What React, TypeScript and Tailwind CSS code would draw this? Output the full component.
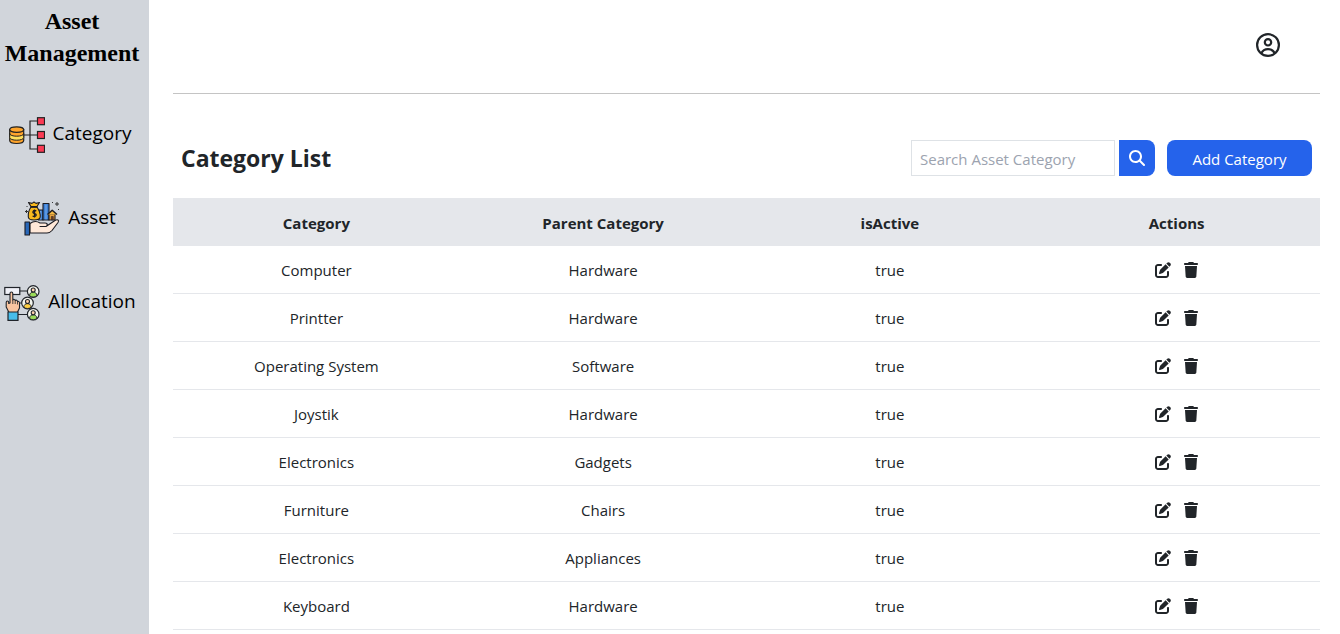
import type { ReactNode } from "react";
import { FaMagnifyingGlass, FaPenToSquare, FaTrash } from "react-icons/fa6";

function CategoryIcon() {
  return (
    <svg viewBox="0 0 36 36" className="size-9 shrink-0" aria-hidden="true">
      <g fill="none" stroke="#222" strokeWidth="1.2">
        <path d="M15 18h13M28 4h-7v28h7" />
      </g>
      <g fill="#fb3b55" stroke="#222" strokeWidth="1.2">
        <rect x="28.5" y="0.7" width="7" height="7" />
        <rect x="28.5" y="14.5" width="7" height="7" />
        <rect x="28.5" y="28.3" width="7" height="7" />
      </g>
      <path d="M.7 12.5v11c0 4 14 4 14 0v-11z" fill="#ffa42b" stroke="#222" strokeWidth="1.2" />
      <path d="M.7 16.5c0 3.6 14 3.6 14 0v4c0 3.6-14 3.6-14 0z" fill="#ffe05c" stroke="#222" strokeWidth="1" />
      <ellipse cx="7.7" cy="12.6" rx="7" ry="2.8" fill="#ffa42b" stroke="#222" strokeWidth="1.2" />
    </svg>
  );
}

function AssetIcon() {
  return (
    <svg viewBox="0 0 36 36" className="size-9 shrink-0" aria-hidden="true">
      <g stroke="#1b1b22" strokeWidth="1.1" strokeLinejoin="round">
        <path d="M14.500 9h4.500v10h-4.500z" fill="#3b7fd6" />
        <path d="M19 2.500h6V19h-6z" fill="#3b7fd6" />
        <path d="M22 3.500V18.500M16.700 10v8.500" stroke="#8fbdf2" strokeWidth=".8" />
        <path d="M25 13h6v6h-6z" fill="#e8a13c" />
        <path d="m23.500 13.500 4.700-4.300 4.800 4.300" fill="#f5b943" strokeWidth="1.500" />
        <path d="M27.300 15.500h2V19h-2z" fill="#733f22" strokeWidth=".5" />
        <path d="M7 6C5 9 4 13 4.300 16c.2 2.500 1.700 3 5.700 3s6-.5 6.200-3c.3-3-1.200-7-3.200-10z" fill="#f8b91e" />
        <path d="m7 5.500-2.500-4 3.500.9 2-1.400 2 1.400 3.500-.9-2.500 4z" fill="#f8b91e" />
        <path d="M6.500 6h7" strokeWidth="1.500" />
        <path d="M6 22.500c4-3 7-2.500 10-.5h5c3 0 3 3.500 0 3.500h-5 6l9-6c2.500-1.700 4.500-.2 3 2L28 29.500c-1.500 1.700-3 2.500-5 2.500H6z" fill="#ffe8d8" />
        <path d="M1 21h4.500v13H1z" fill="#2867b8" />
      </g>
      <path d="M12.300 9.800c-3.500-1.200-4.500 2-2 2.600 3 .7 2.300 3.700-1.700 2.700M10.500 8.500v8" fill="none" stroke="#1b1b22" strokeWidth="1.300" />
      <path d="M31 3h4M33 1v4M1 10.500h3M2.500 9v3M28 1.500h1M2.500 5.500h1M34 8.500h1" stroke="#333" strokeWidth="1" />
    </svg>
  );
}

function Person({ x, y, color }: { x: number; y: number; color: string }) {
  return (
    <g transform={`translate(${x} ${y})`}>
      <circle r="5.800" fill="#f4f5ee" stroke="#20242a" strokeWidth="1.200" />
      <path d="M-3.700 4.100C-3.500 1.500-2 .7 0 .7S3.500 1.500 3.700 4.100C1.700 6-1.700 6-3.700 4.100z" fill={color} stroke="#20242a" strokeWidth=".9" />
      <circle cy="-1.500" r="2" fill="#ffd2ad" stroke="#20242a" strokeWidth="1.100" />
    </g>
  );
}

function AllocationIcon() {
  return (
    <svg viewBox="0 0 36 36" className="size-9 shrink-0" aria-hidden="true">
      <path d="M15 6h8M13 18h8M13 29.500h11" stroke="#20242a" strokeWidth="1.200" />
      <rect x=".8" y="2.500" width="15" height="7" fill="#f0f1f8" stroke="#20242a" strokeWidth="1.200" />
      <Person x={29.2} y={6.5} color="#9bdc59" />
      <Person x={23.5} y={18} color="#ffcf43" />
      <Person x={29.2} y={29.2} color="#9bdc59" />
      <path d="M6 18V8.500c0-2 2.800-2 2.800 0V15c.8-1 2.200-.7 2.400.5.9-.7 2.200-.2 2.300 1 1-.4 2 .2 2 1.500v5l-2.200 4.500H5L2.200 22v-4.500c0-2 2.500-2 2.500 0v1z" fill="#fac5a0" stroke="#20242a" strokeWidth="1.100" strokeLinejoin="round" />
      <path d="M8.800 15v4M11.200 15.500V19M13.500 16.500V19.500" stroke="#20242a" strokeWidth=".8" />
      <path d="M4 27h10v8.300H4z" fill="#48bdea" stroke="#20242a" strokeWidth="1.200" />
    </svg>
  );
}

function ProfileIcon() {
  return (
    <svg viewBox="0 0 24 24" className="size-6" fill="none" stroke="currentColor" strokeWidth="2.200" aria-hidden="true">
      <circle cx="12" cy="12" r="10.900" />
      <circle cx="12" cy="9.300" r="3.200" />
      <path d="M5.300 20.300c1.200-2.500 3.700-4.100 6.700-4.100s5.500 1.600 6.700 4.100" />
    </svg>
  );
}

const navigation: { label: string; icon: ReactNode }[] = [
  { label: "Category", icon: <CategoryIcon /> },
  { label: "Asset", icon: <AssetIcon /> },
  { label: "Allocation", icon: <AllocationIcon /> },
];

const categories = [
  { name: "Computer", parent: "Hardware" },
  { name: "Printter", parent: "Hardware" },
  { name: "Operating System", parent: "Software" },
  { name: "Joystik", parent: "Hardware" },
  { name: "Electronics", parent: "Gadgets" },
  { name: "Furniture", parent: "Chairs" },
  { name: "Electronics", parent: "Appliances" },
  { name: "Keyboard", parent: "Hardware" },
];

export default function App() {
  return (
    <div className="flex min-h-screen bg-white font-['Open_Sans','Noto_Sans',sans-serif] text-[15px] leading-6 text-[#212529]">
      <aside className="w-[149px] shrink-0 bg-[#d1d5db] text-black">
        <h1 className="pt-[5px] pr-[5px] text-center font-['Liberation_Serif',serif] text-2xl font-bold">
          Asset Management
        </h1>
        <nav className="mt-12 flex flex-col gap-12 pr-[9px]">
          {navigation.map(({ label, icon }) => (
            <a key={label} href="#" className="flex items-center justify-center gap-2 text-[19px] leading-9">
              {icon}
              <span className="-mt-1">{label}</span>
            </a>
          ))}
        </nav>
      </aside>

      <main className="min-w-0 flex-1 pr-5 pl-6">
        <header className="flex h-[94px] items-center justify-end border-b border-[#c4c4c4] pr-10 pb-1">
          <button type="button" aria-label="Profile">
            <ProfileIcon />
          </button>
        </header>

        <div className="mt-[46px] flex items-center justify-between px-2">
          <h2 className="text-[23px] leading-9 font-bold">Category List</h2>
          <div className="flex items-center gap-3">
            <form className="flex gap-1" onSubmit={(event) => event.preventDefault()}>
              <input
                type="search"
                aria-label="Search Asset Category"
                placeholder="Search Asset Category"
                className="h-9 w-[204px] border border-[#dee2e6] px-2 pt-0.5 placeholder:text-[#9ca3af]"
              />
              <button
                type="submit"
                aria-label="Search"
                className="flex size-9 items-center justify-center rounded-r-lg bg-[#2563eb] text-white"
              >
                <FaMagnifyingGlass className="size-4" />
              </button>
            </form>
            <button type="button" className="h-9 w-[145px] rounded-lg bg-[#2563eb] pt-0.5 text-white">
              Add Category
            </button>
          </div>
        </div>

        <table className="mt-[22px] w-full table-fixed border-separate border-spacing-0 text-center">
          <thead className="bg-[#e5e7eb]">
            <tr className="h-12">
              <th className="px-2 pt-0.5">Category</th>
              <th className="px-2 pt-0.5">Parent Category</th>
              <th className="px-2 pt-0.5">isActive</th>
              <th className="px-2 pt-0.5">Actions</th>
            </tr>
          </thead>
          <tbody>
            {categories.map(({ name, parent }, index) => (
              <tr key={index} className="h-12">
                <td className="border-b border-[#e5e7eb]">{name}</td>
                <td className="border-b border-[#e5e7eb]">{parent}</td>
                <td className="border-b border-[#e5e7eb]">true</td>
                <td className="border-b border-[#e5e7eb]">
                  <div className="flex justify-center gap-3">
                    <button type="button" aria-label={`Edit ${name}`}>
                      <FaPenToSquare className="size-4" />
                    </button>
                    <button type="button" aria-label={`Delete ${name}`}>
                      <FaTrash className="size-4" />
                    </button>
                  </div>
                </td>
              </tr>
            ))}
          </tbody>
        </table>
      </main>
    </div>
  );
}
